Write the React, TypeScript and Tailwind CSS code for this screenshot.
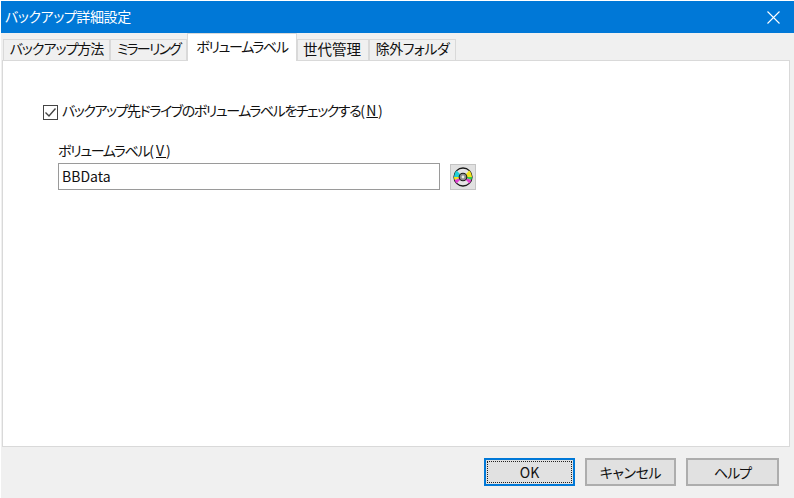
const font = "font-['Noto_Sans_CJK_JP','Liberation_Sans',sans-serif] [font-feature-settings:'palt']"

const tabs = [
  { label: 'バックアップ方法', w: 'w-[107px]', text: 'tracking-[-1px]' },
  { label: 'ミラーリング', w: 'w-[77px]', text: 'tracking-[-1.8px]' },
  { label: 'ボリュームラベル', w: 'w-[110px]', text: 'tracking-[-1.35px]', active: true },
  { label: '世代管理', w: 'w-[72px]', text: 'text-[14.5px] pr-[2px]' },
  { label: '除外フォルダ', w: 'w-[87px]', text: 'tracking-[-0.5px]' },
]

function DiscIcon() {
  return (
    <svg width="20" height="20" viewBox="0 0 20 20">
      <circle cx="10" cy="10" r="9" fill="#e4e4e4" stroke="#1a1a1a" strokeWidth="1.3" />
      <path d="M10 10 L3.6 3.6 A9 9 0 0 0 1 10 Z" fill="#22d0d8" />
      <path d="M10 10 L1 10 A9 9 0 0 0 1.6 13 Z" fill="#f2e41e" />
      <path d="M10 10 L1.6 13 A9 9 0 0 0 3.6 16.4 Z" fill="#e040d0" />
      <path d="M10 10 L16.4 3.6 A9 9 0 0 1 19 10 Z" fill="#f2e41e" />
      <path d="M10 10 L19 10 A9 9 0 0 1 18.4 13 Z" fill="#38d048" />
      <path d="M10 10 L18.4 13 A9 9 0 0 1 16.4 16.4 Z" fill="#e040d0" />
      <circle cx="10" cy="10" r="3.8" fill="#8c8c8c" stroke="#1a1a1a" strokeWidth="1.1" />
      <circle cx="10" cy="10" r="1.4" fill="#e8e8e8" />
    </svg>
  )
}

export default function App() {
  return (
    <div className={`w-[794px] h-[498px] flex flex-col bg-[#f0f0f0] border-l border-t border-white overflow-hidden text-[14px] text-[#111] ${font}`}>
      <div className="h-[32px] shrink-0 bg-[#0078d7] flex items-center justify-between pl-[4px] pr-[14px] pb-[2px] text-white">
        <span className="tracking-[-0.4px]">バックアップ詳細設定</span>
        <svg className="mt-[2px]" width="13" height="13" viewBox="0 0 13 13" stroke="white" strokeWidth="1.1">
          <path d="M0.5 0.5 L12.5 12.5 M12.5 0.5 L0.5 12.5" />
        </svg>
      </div>

      <div className="h-[27px] shrink-0 flex items-end pl-[2px]">
        {tabs.map((t) =>
          t.active ? (
            <div key={t.label} className={`${t.w} h-[28px] -mb-px z-10 bg-white border border-b-0 border-[#d9d9d9] flex items-center justify-center pb-[2px]`}>
              <span className={t.text}>{t.label}</span>
            </div>
          ) : (
            <div key={t.label} className={`${t.w} h-[21px] bg-[#f0f0f0] border border-b-0 border-[#d9d9d9] flex items-center justify-center pb-[3px]`}>
              <span className={t.text}>{t.label}</span>
            </div>
          )
        )}
      </div>

      <div className="h-[387px] shrink-0 ml-px w-[788px] bg-white border border-[#d9d9d9] pl-[40px] pt-[41px]">
        <label className="flex items-center gap-[4px] h-[20px]">
          <span className="w-[15px] h-[15px] border border-[#444] bg-white flex items-center justify-center">
            <svg width="13" height="13" viewBox="0 0 13 13" fill="none" stroke="#444" strokeWidth="1.4">
              <path d="M1.5 6.5 L5 10 L11.5 2.5" />
            </svg>
          </span>
          <span className="pb-[3px]">
            <span className="tracking-[-1.44px]">バックアップ先ドライブのボリュームラベルをチェックする</span>
            <span className="tracking-[1.4px]">(<span className="underline">N</span>)</span>
          </span>
        </label>

        <div className="mt-[18px] ml-[15px] h-[20px] flex items-center">
          <span>
            <span className="tracking-[-1.35px]">ボリュームラベル</span>
            <span className="tracking-[2px]">(<span className="underline">V</span>)</span>
          </span>
        </div>
        <div className="mt-[3px] ml-[15px] flex items-center gap-[10px]">
          <div className="w-[382px] h-[27px] border border-[#9a9a9a] bg-white flex items-center pl-[3px]">BBData</div>
          <button className="w-[26px] h-[26px] bg-[#e1e1e1] border border-[#c4c4c4] flex items-center justify-center">
            <DiscIcon />
          </button>
        </div>
      </div>

      <div className="flex-1 flex justify-end items-start pt-[11px] pr-[15px] gap-[10px]">
        <button className="w-[91px] h-[28px] bg-[#e1e1e1] border-2 border-[#0078d7] flex items-center justify-center p-px">
          <span className="w-full h-full border border-dotted border-[#222] flex items-center justify-center">OK</span>
        </button>
        <button className="w-[91px] h-[28px] bg-[#e1e1e1] border-2 border-[#adadad] tracking-[-0.4px]">キャンセル</button>
        <button className="w-[93px] h-[28px] bg-[#e1e1e1] border-2 border-[#adadad] tracking-[-1px]">ヘルプ</button>
      </div>
    </div>
  )
}
